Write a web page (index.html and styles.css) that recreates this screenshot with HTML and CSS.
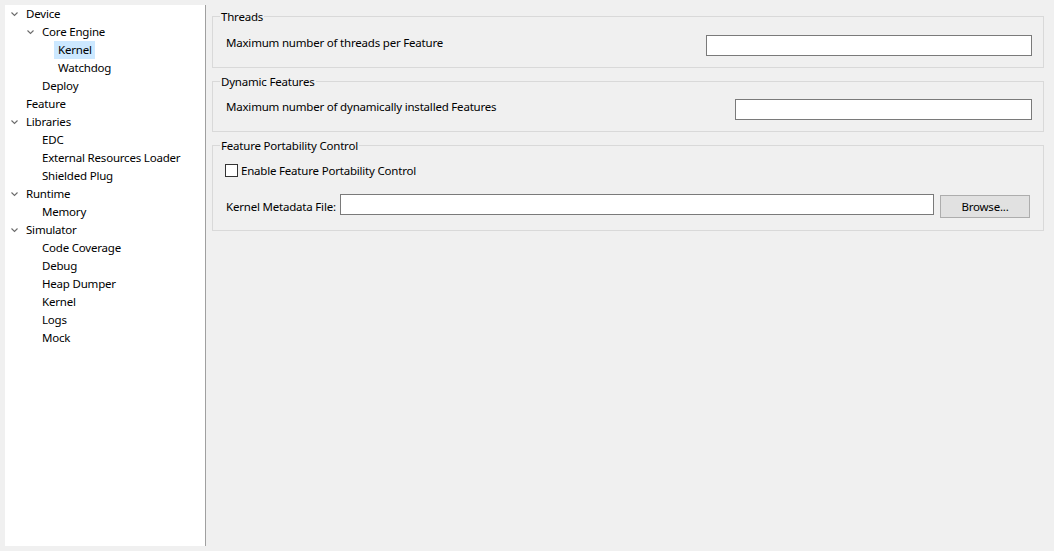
FILE: index.html
```html
<!DOCTYPE html>
<html>
<head>
<meta charset="utf-8">
<link rel="stylesheet" href="styles.css">
</head>
<body>
<div class="window">
  <nav class="tree">
    <div class="row l0"><span class="tog"><svg width="7" height="5" viewBox="0 0 7 5"><polyline points="0.5,0.5 3.5,3.5 6.5,0.5" /></svg></span><span class="lbl">Device</span></div>
    <div class="row l1"><span class="tog"><svg width="7" height="5" viewBox="0 0 7 5"><polyline points="0.5,0.5 3.5,3.5 6.5,0.5" /></svg></span><span class="lbl">Core Engine</span></div>
    <div class="row l2"><span class="tog"></span><span class="lbl sel">Kernel</span></div>
    <div class="row l2"><span class="tog"></span><span class="lbl">Watchdog</span></div>
    <div class="row l1"><span class="tog"></span><span class="lbl">Deploy</span></div>
    <div class="row l0"><span class="tog"></span><span class="lbl">Feature</span></div>
    <div class="row l0"><span class="tog"><svg width="7" height="5" viewBox="0 0 7 5"><polyline points="0.5,0.5 3.5,3.5 6.5,0.5" /></svg></span><span class="lbl">Libraries</span></div>
    <div class="row l1"><span class="tog"></span><span class="lbl">EDC</span></div>
    <div class="row l1"><span class="tog"></span><span class="lbl">External Resources Loader</span></div>
    <div class="row l1"><span class="tog"></span><span class="lbl">Shielded Plug</span></div>
    <div class="row l0"><span class="tog"><svg width="7" height="5" viewBox="0 0 7 5"><polyline points="0.5,0.5 3.5,3.5 6.5,0.5" /></svg></span><span class="lbl">Runtime</span></div>
    <div class="row l1"><span class="tog"></span><span class="lbl">Memory</span></div>
    <div class="row l0"><span class="tog"><svg width="7" height="5" viewBox="0 0 7 5"><polyline points="0.5,0.5 3.5,3.5 6.5,0.5" /></svg></span><span class="lbl">Simulator</span></div>
    <div class="row l1"><span class="tog"></span><span class="lbl">Code Coverage</span></div>
    <div class="row l1"><span class="tog"></span><span class="lbl">Debug</span></div>
    <div class="row l1"><span class="tog"></span><span class="lbl">Heap Dumper</span></div>
    <div class="row l1"><span class="tog"></span><span class="lbl">Kernel</span></div>
    <div class="row l1"><span class="tog"></span><span class="lbl">Logs</span></div>
    <div class="row l1"><span class="tog"></span><span class="lbl">Mock</span></div>
  </nav>
  <main class="content">
    <fieldset class="group g1">
      <legend>Threads</legend>
      <div class="field">
        <span class="text">Maximum number of threads per Feature</span>
        <span class="input in1"></span>
      </div>
    </fieldset>
    <fieldset class="group g2">
      <legend>Dynamic Features</legend>
      <div class="field">
        <span class="text">Maximum number of dynamically installed Features</span>
        <span class="input in2"></span>
      </div>
    </fieldset>
    <fieldset class="group g3">
      <legend>Feature Portability Control</legend>
      <label class="check"><span class="box"></span><span class="text">Enable Feature Portability Control</span></label>
      <div class="file">
        <span class="text">Kernel Metadata File:</span>
        <span class="input in3"></span>
        <span class="button">Browse...</span>
      </div>
    </fieldset>
  </main>
</div>
</body>
</html>
```
FILE: styles.css
```css
html, body {
  margin: 0;
  padding: 0;
  background: #f0f0f0;
}
body {
  font-family: "Noto Sans", "Open Sans", sans-serif;
  font-size: 11.5px;
  letter-spacing: -0.2px;
  color: #000;
}
.window {
  display: flex;
  height: 551px;
  box-sizing: border-box;
  padding: 5px 0 5px 5px;
}
.tree {
  width: 200px;
  height: 541px;
  background: #fff;
  border-right: 1px solid #a0a0a0;
  flex: none;
}
.row {
  display: flex;
  align-items: center;
  height: 18px;
  line-height: 17px;
  white-space: nowrap;
}
.row.l0 { padding-left: 3px; }
.row.l1 { padding-left: 19px; }
.row.l2 { padding-left: 35px; }
.tog {
  width: 14px;
  height: 18px;
  flex: none;
  display: flex;
  align-items: center;
  padding-left: 3px;
  box-sizing: border-box;
}
.tog svg { display: block; }
.tog polyline {
  fill: none;
  stroke: #6b6b6b;
  stroke-width: 1.1;
}
.lbl {
  padding: 0 3px 0 4px;
  height: 18px;
  line-height: 18px;
}
.lbl.sel { background: #cce8ff; }
.content {
  flex: 1;
  padding: 3px 10px 0 6px;
  display: flex;
  flex-direction: column;
  gap: 5px;
}
.group {
  margin: 0;
  border: 1px solid #d9d9d9;
  padding: 0 11px 0 13px;
}
.group legend {
  margin-left: -6px;
  padding: 0 1px;
  line-height: 17px;
}
.text {
  white-space: nowrap;
  line-height: 16px;
}
.field {
  display: flex;
  justify-content: space-between;
  align-items: flex-start;
  height: 21px;
  margin-bottom: 11px;
}
.g1 .field { margin-top: 10px; }
.g2 .field { margin-top: 9px; }
.field .text { margin-top: 0; }
.input {
  display: block;
  height: 21px;
  box-sizing: border-box;
  border: 1px solid #7a7a7a;
  background: #fff;
}
.in1 { width: 326px; }
.in2 { width: 297px; }
.check {
  display: flex;
  align-items: center;
  gap: 3px;
  margin-top: 10px;
  margin-left: -1px;
  height: 13px;
}
.box {
  width: 13px;
  height: 13px;
  box-sizing: border-box;
  border: 1px solid #333;
  background: #fff;
}
.file {
  display: flex;
  align-items: flex-start;
  margin-top: 17px;
  margin-bottom: 12px;
  height: 24px;
}
.file .text {
  width: 114px;
  flex: none;
  margin-top: 5px;
}
.in3 { flex: 1; }
.button {
  width: 90px;
  height: 23px;
  box-sizing: border-box;
  margin: 1px 2px 0 6px;
  border: 1px solid #adadad;
  background: #e1e1e1;
  display: flex;
  align-items: center;
  justify-content: center;
  line-height: 16px;
}
```
